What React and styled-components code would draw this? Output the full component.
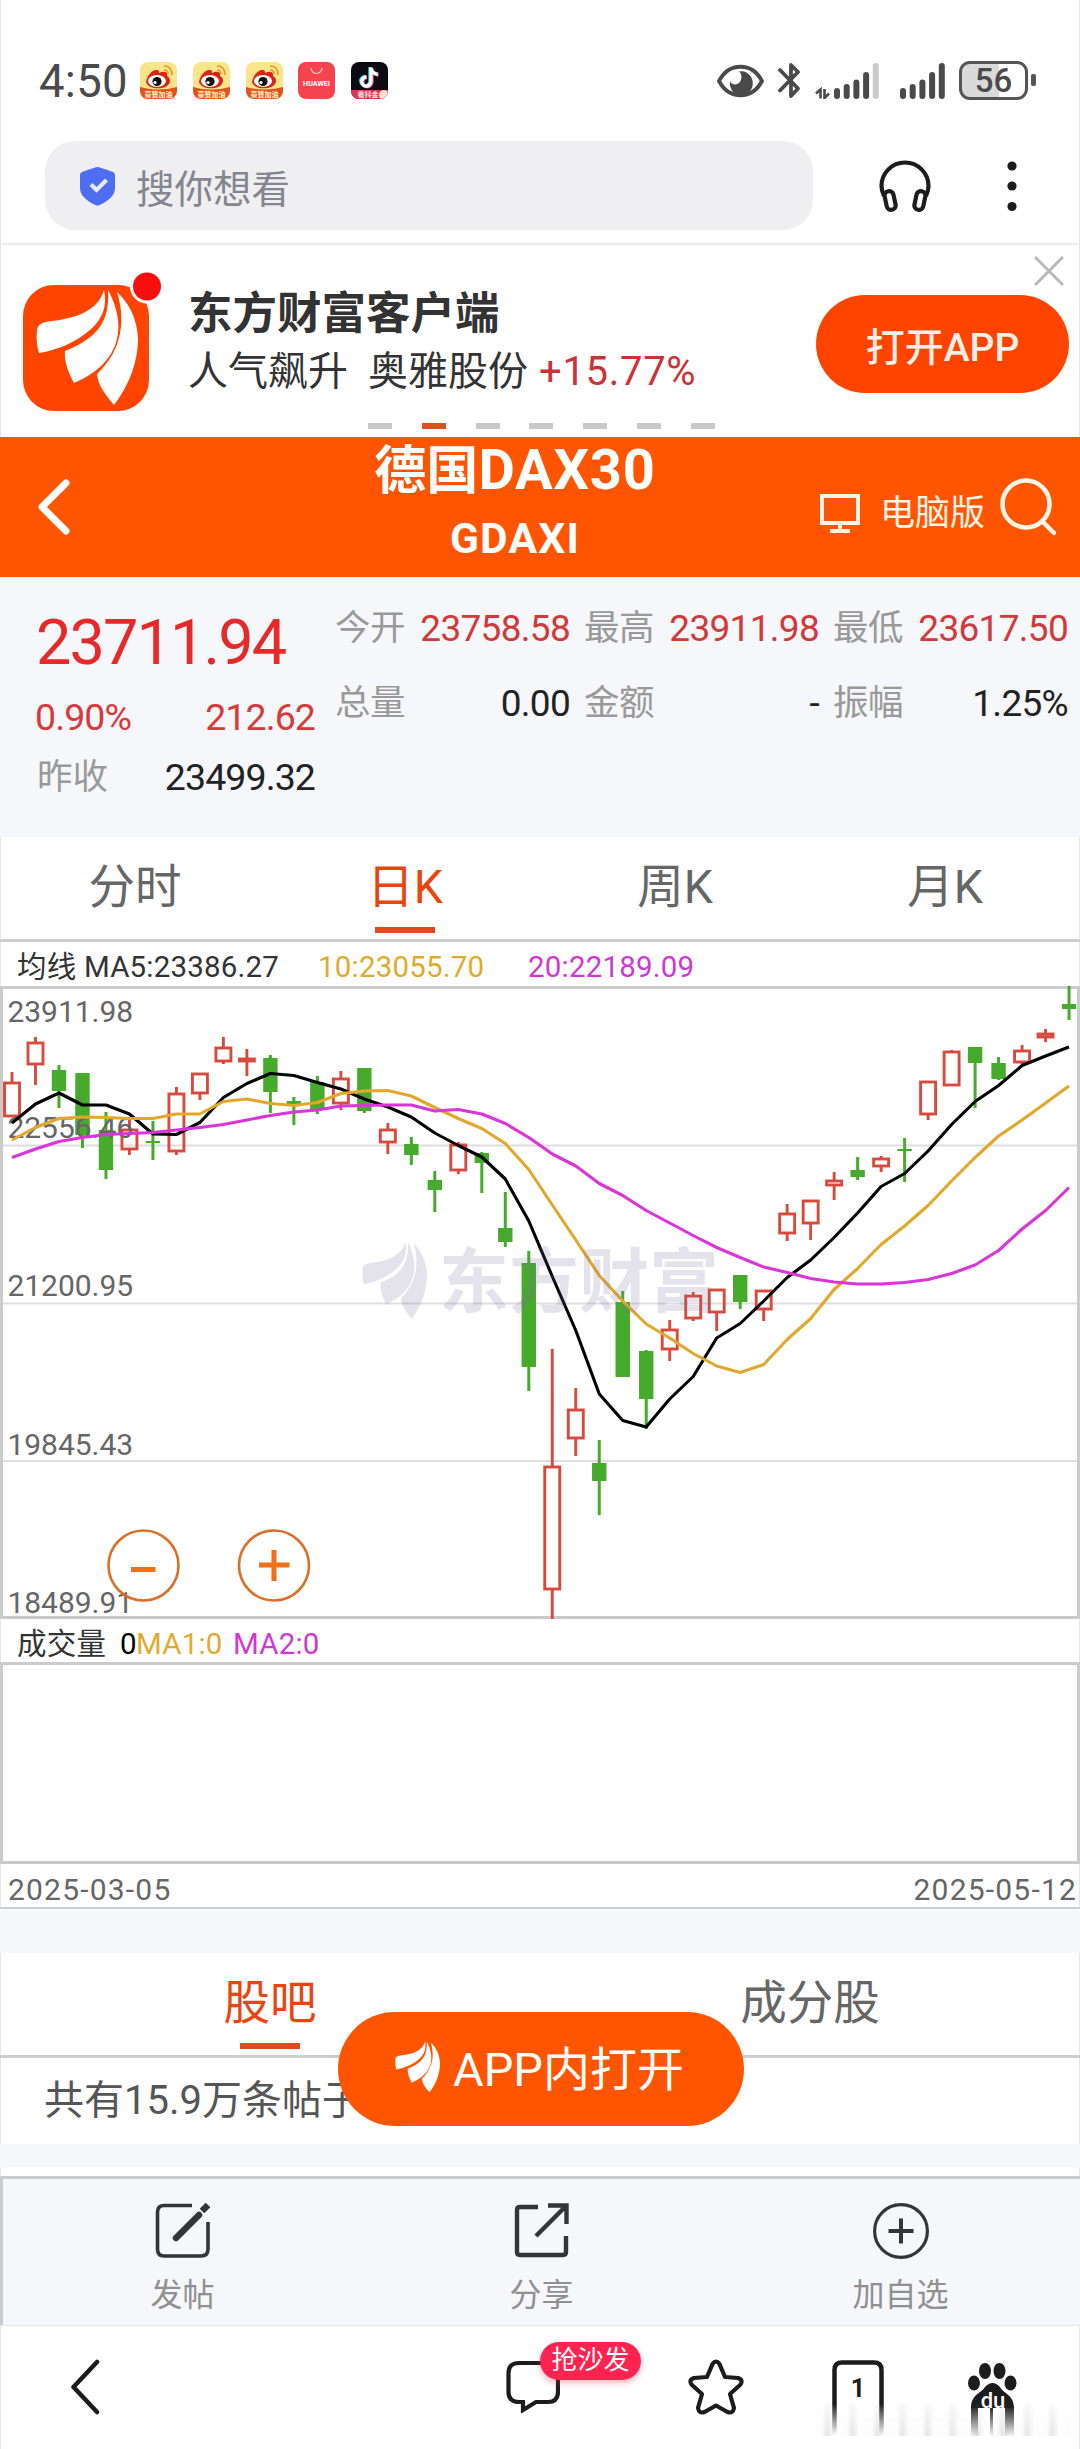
import React from 'react'
import styled, { createGlobalStyle } from 'styled-components'

const GlobalStyle = createGlobalStyle`
  *{
    box-sizing:border-box;
  }
  body{
    margin:0;
    background:#fff;
    font-family:Roboto, "Noto Sans CJK SC", sans-serif;
  }
  svg{
    display:block;
    flex:none;
  }
`;

// [open side, close side, high, low, up]
const candles = [
  [1083, 1116, 1072, 1117, 1], [1043, 1064, 1037, 1085, 1], [1070, 1091, 1065, 1108, 0],
  [1073, 1135, 1073, 1148, 0], [1130, 1170, 1112, 1179, 0], [1130, 1149, 1120, 1155, 1],
  [1141, 1143, 1121, 1160, 0], [1094, 1151, 1087, 1155, 1], [1074, 1093, 1073, 1100, 1],
  [1048, 1061, 1037, 1064, 1], [1059, 1061, 1049, 1076, 1], [1058, 1092, 1055, 1113, 0],
  [1101, 1104, 1097, 1125, 0], [1082, 1110, 1076, 1114, 0], [1079, 1103, 1071, 1110, 1],
  [1068, 1111, 1068, 1113, 0], [1130, 1142, 1123, 1154, 1], [1144, 1155, 1137, 1165, 0],
  [1180, 1190, 1171, 1212, 0], [1145, 1170, 1142, 1174, 1], [1153, 1163, 1152, 1193, 0],
  [1228, 1242, 1192, 1247, 0], [1263, 1367, 1251, 1391, 0], [1467, 1589, 1349, 1619, 1],
  [1410, 1438, 1388, 1456, 1], [1463, 1481, 1440, 1515, 0], [1302, 1377, 1291, 1377, 0],
  [1351, 1399, 1350, 1429, 0], [1330, 1349, 1320, 1361, 1], [1296, 1318, 1292, 1321, 1],
  [1290, 1312, 1289, 1331, 1], [1275, 1302, 1275, 1309, 0], [1291, 1309, 1290, 1321, 1],
  [1214, 1233, 1204, 1241, 1], [1201, 1223, 1200, 1240, 1], [1181, 1185, 1172, 1200, 1],
  [1170, 1177, 1157, 1180, 0], [1159, 1166, 1156, 1172, 1], [1149, 1151, 1138, 1182, 0],
  [1082, 1114, 1081, 1120, 1], [1052, 1085, 1050, 1086, 1], [1047, 1063, 1047, 1108, 0],
  [1063, 1079, 1057, 1080, 0], [1051, 1062, 1045, 1064, 1], [1034, 1037, 1029, 1042, 1],
  [1004, 1009, 986, 1020, 0],
]

const ma5 = [1123, 1104, 1093, 1105, 1105, 1114, 1134, 1134.5, 1122.5, 1097.5, 1083.5, 1073.5, 1075.5, 1082.5, 1089, 1099, 1107, 1117, 1133, 1145.5, 1157, 1179, 1221, 1276.5, 1330.5, 1394, 1420.5, 1427, 1399, 1376.5, 1338, 1323.5, 1301, 1277.5, 1260, 1237.5, 1213, 1186.5, 1173.5, 1151, 1124.5, 1101.5, 1085.5, 1065.5, 1056, 1047]
const ma10 = [1140, 1127.5, 1118.5, 1117, 1117.5, 1118.5, 1118.5, 1114, 1114, 1101.5, 1099, 1103.5, 1105.5, 1102.5, 1093.5, 1091, 1090.5, 1096, 1107.5, 1118.5, 1128.5, 1143.5, 1169.5, 1205, 1240, 1275.5, 1301, 1324, 1338, 1353.5, 1366, 1372.5, 1364.5, 1339.5, 1318.5, 1289.5, 1268.5, 1244.5, 1226, 1205.5, 1181, 1157.5, 1136, 1120, 1103, 1086]
const ma20 = [1157.5, 1149, 1141.5, 1137.5, 1134.5, 1133.5, 1132.5, 1130, 1127.5, 1124.5, 1120, 1115.5, 1112, 1110, 1106, 1105.5, 1105, 1105, 1111, 1109.5, 1114, 1123.5, 1137.5, 1154, 1166, 1183.5, 1195.5, 1210.5, 1223, 1235.5, 1247.5, 1257.5, 1267, 1272.5, 1278.5, 1282, 1284, 1284, 1282.5, 1279.5, 1273.5, 1265, 1250.5, 1229, 1210.5, 1187.5]

const xAt = (i) => 12 + i * 23.49
const toPoints = (list) => list.map((y, i) => `${xAt(i).toFixed(1)},${y}`).join(' ')

const axisLabels = [
  ['23911.98', 1022], ['22556.46', 1138], ['21200.95', 1296], ['19845.43', 1455], ['18489.91', 1613],
]

const quotes = [
  { label: '今开', value: '23758.58', red: true },
  { label: '最高', value: '23911.98', red: true },
  { label: '最低', value: '23617.50', red: true },
  { label: '总量', value: '0.00' },
  { label: '金额', value: '-' },
  { label: '振幅', value: '1.25%' },
]

const Petals = () => (
  <>
    <path d='M104 291C98 312 76 319 52 322C42 323 38 325 37 331C36 340 37 347 39 354C58 351 76 343 90 331C104 319 107 305 104 291Z' />
    <path d='M108 291C110 322 98 339 65 352C64 363 69 375 74 384C98 374 115 358 118 334C120 318 114 302 108 291Z' />
    <path d='M117 293C125 318 124 350 97 375C98 387 106 396 114 406C131 384 138 360 138 340C137 318 128 303 117 293Z' />
  </>
)

const WeiboIcon = () => (
  <svg width='37' height='37' viewBox='0 0 37 37'>
    <defs><clipPath id='wb'><rect width='37' height='37' rx='8' /></clipPath></defs>
    <g clipPath='url(#wb)'>
      <rect width='37' height='37' fill='#fbe58a' />
      <path d='M0 25Q18 30 37 25V37H0Z' fill='#e2521c' />
      <path d='M6 20C7 13 13 7 17 8C19 8 19 9 19 11C23 9 28 9 27 14C31 16 31 21 27 24C21 28 8 27 6 20Z' fill='#dd2414' />
      <ellipse cx='17' cy='19' rx='9' ry='6' fill='#fff' />
      <circle cx='17' cy='19.5' r='4.6' fill='#111' />
      <circle cx='15' cy='20.5' r='1.6' fill='#fff' />
      <path d='M24 4Q32 4 32 13M24 8Q28 8 28 12' fill='none' stroke='#e39a2c' strokeWidth='1.6' />
      <text x='18.5' y='35' fontSize='7' fontWeight='700' textAnchor='middle' fill='#fff3c4'>豪赞加油</text>
    </g>
  </svg>
)

const HuaweiIcon = () => (
  <svg width='37' height='37' viewBox='0 0 37 37'>
    <rect width='37' height='37' rx='8' fill='#f5444e' />
    <path d='M13 6A5.5 5.5 0 0 0 24 6' fill='none' stroke='#ffd9da' strokeWidth='1.2' />
    <text x='18.5' y='24' fontSize='7.2' fontWeight='700' textAnchor='middle' fill='#fff'>HUAWEI</text>
  </svg>
)

const TiktokIcon = () => (
  <svg width='37' height='37' viewBox='0 0 37 37'>
    <defs><clipPath id='tk'><rect width='37' height='37' rx='8' /></clipPath></defs>
    <g clipPath='url(#tk)'>
      <rect width='37' height='37' fill='#0c0b14' />
      <g fill='none' strokeWidth='3.4'>
        <path d='M19 5V19A4.6 4.6 0 1 1 14.5 14.5M19 6Q20 11 26 12' stroke='#35dbe0' />
        <path d='M21 6V20A4.6 4.6 0 1 1 16 15.5M21 7Q22 12 27.5 13' stroke='#f2385c' />
        <path d='M20 5.5V19.5A4.6 4.6 0 1 1 15.5 15M20 6.5Q21 11.5 27 12.5' stroke='#fff' />
      </g>
      <path d='M0 28H37V37H0Z' fill='#d63a52' />
      <text x='17' y='35' fontSize='7' fontWeight='700' textAnchor='middle' fill='#ffe1e1'>看抖金</text>
      <circle cx='33' cy='33' r='5' fill='#ffe3cf' />
    </g>
  </svg>
)

const SignalBars = ({ faded, data }) => (
  <svg width={data ? 64 : 45} height='37' viewBox={data ? '-19 0 64 37' : '0 0 45 37'}>
    {data && <path d='M-18 31.5L-13.5 27.500V36.500M-9.500 27V36L-5 31.500' fill='none' stroke='#4a4a4a' strokeWidth='2.6' />}
    {[26, 22, 17.5, 10, 1].map((y, i) => (
      <rect key={y} x={i * 9.7} y={y} width='6' height={37 - y} rx='3' fill={faded && i === 4 ? '#cbcbcb' : '#4a4a4a'} />
    ))}
  </svg>
)

const Chart = () => (
  <svg width='1080' height='634' viewBox='0 986 1080 634'>
    <g stroke='#dedede' strokeWidth='1.8'>
      <path d='M0 1145.5H1080M0 1303.5H1080M0 1461H1080' />
    </g>
    <path d='M1.5 987.5H1078.5V1617.5H1.5Z' fill='none' stroke='#cbcbcb' strokeWidth='3' />
    {candles.map(([top, bottom, high, low, up], i) => {
      const x = xAt(i)
      return up ? (
        <g key={i} fill='none' stroke='#d84a3e' strokeWidth='2.9'>
          <path d={`M${x} ${high}V${top}M${x} ${bottom}V${low}`} />
          <rect x={x - 7.500} y={top} width='15' height={bottom - top} />
        </g>
      ) : (
        <g key={i} fill='#46aa2c'>
          <rect x={x - 1.5} y={high} width='3' height={low - high} />
          <rect x={x - 7.2} y={top} width='14.4' height={bottom - top} />
        </g>
      )
    })}
    <g fontSize='30' fill='#666' letterSpacing='-0.05'>
      {axisLabels.map(([text, y]) => <text key={text} x='7.5' y={y}>{text}</text>)}
    </g>
    <g fill='none' strokeWidth='3.1' strokeLinejoin='round'>
      <polyline points={toPoints(ma5)} stroke='#000' />
      <polyline points={toPoints(ma10)} stroke='#e3a82b' />
      <polyline points={toPoints(ma20)} stroke='#d935d9' />
    </g>
    <g fill='#77709a' opacity='0.19'>
      <g transform='translate(362 1242) scale(0.637 0.670) translate(-36 -291)'><Petals /></g>
      <text x='439' y='1307' fontSize='70' fontWeight='700'>东方财富</text>
    </g>
    <g fill='none' stroke='#dc6f28'>
      <circle cx='143.5' cy='1565.5' r='35' strokeWidth='2.6' />
      <circle cx='274' cy='1565.5' r='35' strokeWidth='2.6' />
      <path d='M131 1569.5H155.500M259 1565H289.500M274 1550V1581' strokeWidth='5' stroke='#ee7018' />
    </g>
  </svg>
)

export default function App() {
  return (
    <Page lang='zh-CN'>
      <GlobalStyle />
      <StatusBar>
        <Clock>4:50</Clock>
        <AppIcons>
          <WeiboIcon /><WeiboIcon /><WeiboIcon /><HuaweiIcon /><TiktokIcon />
        </AppIcons>
        <StatusIcons>
          <svg width='47' height='34' viewBox='0 0 47 34'>
            <path d='M2 17C12-2 35-2 45 17C35 36 12 36 2 17Z' fill='none' stroke='#4a4a4a' strokeWidth='3.8' />
            <path d='M22 7.500A11.500 12 0 1 1 13 17C14 21 21 22 23.500 17C25.500 13 24 9 22 7.500Z' fill='#4a4a4a' />
          </svg>
          <svg width='23' height='37' viewBox='0 0 23 37'>
            <path d='M2 8L20 26.5L13 34V3L20 10L2 28.5' fill='none' stroke='#4a4a4a' strokeWidth='3.8' strokeLinecap='round' strokeLinejoin='round' />
          </svg>
          <SignalBars data faded />
          <SignalBars />
          <Battery><span>56</span></Battery>
        </StatusIcons>
      </StatusBar>

      <SearchRow>
        <SearchBox>
          <svg width='37' height='40' viewBox='0 0 37 40'>
            <path d='M18.5 1Q20 1 34 6Q36 7 36 9V22C36 30 29 35 20 39.3Q18.5 40 17 39.3C8 35 1 30 1 22V9Q1 7 3 6Q17 1 18.5 1Z' fill='#4e6ef2' />
            <path d='M12 18.5L17.5 24L27.5 14' fill='none' stroke='#e8ebfb' strokeWidth='4' />
          </svg>
          搜你想看
        </SearchBox>
        <svg width='52' height='52' viewBox='0 0 52 52' fill='none' stroke='#1c1c1c' strokeWidth='4.2'>
          <path d='M5 36Q2.5 30 2.5 26A23.5 23.5 0 0 1 49.5 26Q49.5 30 47 36' />
          <rect x='6.5' y='31' width='9' height='19' rx='4.5' transform='rotate(-12 11 40)' />
          <rect x='36.5' y='31' width='9' height='19' rx='4.5' transform='rotate(12 41 40)' />
        </svg>
        <svg width='10' height='52' viewBox='0 0 10 52' fill='#1c1c1c'>
          <circle cx='5' cy='6' r='4.6' /><circle cx='5' cy='26' r='4.6' /><circle cx='5' cy='46.5' r='4.6' />
        </svg>
      </SearchRow>

      <Banner>
        <BannerRow>
          <svg width='142' height='142' viewBox='20 270 142 142'>
            <rect x='23' y='286' width='126' height='126' rx='31' fill='#ff4400' />
            <g fill='#fff'><Petals /></g>
            <circle cx='147' cy='287.5' r='17' fill='#fff' />
            <circle cx='147' cy='287.5' r='14' fill='#fb0d0d' />
          </svg>
          <BannerText>
            <h3>东方财富客户端</h3>
            <p>人气飙升<Gap />奥雅股份<b>+15.77%</b></p>
          </BannerText>
          <OpenButton>打开APP</OpenButton>
        </BannerRow>
        <Dots>
          {[0, 1, 2, 3, 4, 5, 6].map((n) => <Dot key={n} $active={n === 1} />)}
        </Dots>
        <Close width='30' height='30' viewBox='0 0 30 30'>
          <path d='M1 1L29 29M29 1L1 29' stroke='#b9b9b9' strokeWidth='3' />
        </Close>
      </Banner>

      <TitleBar>
        <svg width='33' height='56' viewBox='0 0 33 56'>
          <path d='M29 4L5 28L29 52' fill='none' stroke='#fff' strokeWidth='7' strokeLinecap='round' strokeLinejoin='round' />
        </svg>
        <Title>
          <h1>德国<span>DAX30</span></h1>
          <h2>GDAXI</h2>
        </Title>
        <TitleTools>
          <svg width='42' height='40' viewBox='0 0 42 40' fill='none' stroke='#fff5e6' strokeWidth='4'>
            <path d='M3 2H39V29H3ZM21 29V37M11 37H31' />
          </svg>
          <span>电脑版</span>
          <svg width='56' height='58' viewBox='0 0 56 58' fill='none' stroke='#fff5e6' strokeWidth='4.5'>
            <circle cx='26' cy='26' r='23.5' />
            <path d='M42 43L54 55' strokeLinecap='round' />
          </svg>
        </TitleTools>
      </TitleBar>

      <Info>
        <PriceColumn>
          <Price>23711.94</Price>
          <PriceRow $red><span>0.90%</span><span>212.62</span></PriceRow>
          <PriceRow><em>昨收</em><span>23499.32</span></PriceRow>
        </PriceColumn>
        <QuoteGrid>
          {quotes.map((q) => (
            <Quote key={q.label} $red={q.red}><em>{q.label}</em><span>{q.value}</span></Quote>
          ))}
        </QuoteGrid>
      </Info>

      <Tabs>
        <Tab>分时</Tab>
        <Tab $active>日K</Tab>
        <Tab>周K</Tab>
        <Tab>月K</Tab>
      </Tabs>

      <MaRow>
        <MaText $width='301px'>均线 MA5:23386.27</MaText>
        <MaText $width='210px' $color='#dfab2e'>10:23055.70</MaText>
        <MaText $color='#cf38d2'>20:22189.09</MaText>
      </MaRow>
      <Chart />
      <VolumeRow>
        <MaText $width='103px'>成交量</MaText>
        <MaText $width='16px' $color='#000'>0</MaText>
        <MaText $width='97px' $color='#dfab2e'>MA1:0</MaText>
        <MaText $color='#cf38d2'>MA2:0</MaText>
      </VolumeRow>
      <VolumeBox />
      <DateRow><span>2025-03-05</span><span>2025-05-12</span></DateRow>
      <Spacer $height='44px' />

      <Tabs>
        <Tab $active>股吧</Tab>
        <Tab>成分股</Tab>
      </Tabs>
      <PostCount>共有15.9万条帖子</PostCount>
      <Spacer $height='23px' />

      <Toolbar>
        <Tool>
          <svg width='56' height='56' viewBox='0 0 56 56' fill='none' stroke='#333538'>
            <path d='M37 2.5H9Q2.5 2.5 2.5 9V46Q2.5 53 9 53H46Q53 53 53 46V19' strokeWidth='3.6' />
            <path d='M21 35L44 12' strokeWidth='6.5' strokeLinecap='round' />
            <path d='M47 8L53 2' strokeWidth='6.5' />
          </svg>
          发帖
        </Tool>
        <Tool>
          <svg width='56' height='56' viewBox='0 0 56 56' fill='none' stroke='#333538' strokeWidth='4.4'>
            <path d='M24 4H6Q3 4 3 7V49Q3 52 6 52H49Q52 52 52 49V33M34 2.5H52.5V21M52 3L22 33' />
          </svg>
          分享
        </Tool>
        <Tool>
          <svg width='56' height='56' viewBox='0 0 56 56' fill='none' stroke='#333538' strokeWidth='3.2'>
            <circle cx='28' cy='28' r='26.4' />
            <path d='M15.5 28H40.5M28 15.5V40.5' strokeWidth='4' />
          </svg>
          加自选
        </Tool>
      </Toolbar>

      <NavBar>
        <svg width='30' height='56' viewBox='0 0 30 56'>
          <path d='M27 3L3.5 28L27 53' fill='none' stroke='#1c1c1c' strokeWidth='4.5' strokeLinecap='round' strokeLinejoin='round' />
        </svg>
        <NavComment>
          <svg width='54' height='54' viewBox='0 0 54 54'>
            <path d='M13 4H42Q52 4 52 14V33Q52 43 42 43H30L17 51V43H13Q2.5 43 2.5 33V14Q2.5 4 13 4Z' fill='none' stroke='#1c1c1c' strokeWidth='4.2' />
          </svg>
          <Badge>抢沙发</Badge>
        </NavComment>
        <svg width='56' height='56' viewBox='0 0 56 56'>
          <path d='M24.5 5Q28 0 31.5 5L37 18L50 19Q56 21 52 26L42 35L46 49Q45 55 39.5 53L28 46.5L16.5 53Q11 55 10 49L14 35L4 26Q0 21 6 19L19 18Z' fill='none' stroke='#1c1c1c' strokeWidth='4.2' strokeLinejoin='round' />
        </svg>
        <svg width='52' height='76' viewBox='0 0 52 76'>
          <defs>
            <linearGradient id='fade' gradientUnits='userSpaceOnUse' x1='0' y1='44' x2='0' y2='75'>
              <stop offset='0' stopColor='#1c1c1c' />
              <stop offset='1' stopColor='#1c1c1c' stopOpacity='0' />
            </linearGradient>
          </defs>
          <path d='M2.5 76V10Q2.5 2.5 10 2.5H42Q49.5 2.5 49.5 10V76' fill='none' stroke='url(#fade)' strokeWidth='4.5' />
          <text x='26' y='36.5' fontSize='25' fontWeight='700' textAnchor='middle' fill='#1c1c1c'>1</text>
        </svg>
        <svg width='50' height='76' viewBox='0 0 50 76'>
          <g fill='#1c1c1c'>
            <ellipse cx='17' cy='9' rx='6' ry='8' /><ellipse cx='31.5' cy='9' rx='6' ry='8' />
            <ellipse cx='6' cy='21' rx='6' ry='7.5' /><ellipse cx='42.500' cy='21' rx='6' ry='7.5' />
            <path d='M3 46C3 33 12 32 17 25Q24.5 17 32 25C36 32 46 33 46 46Z' />
          </g>
          <path d='M3 46H10V76H3ZM22 46H25V76H22ZM37 46H46V76H37Z' fill='url(#fade)' />
          <text x='25' y='46' fontSize='22' fontWeight='500' textAnchor='middle' fill='#fff'>du</text>
        </svg>
        <Haze />
      </NavBar>

      <FloatButton>
        <svg width='45' height='52' viewBox='36 291 102 115' fill='#fff'><Petals /></svg>
        <span>APP内打开</span>
      </FloatButton>
    </Page>
  )
}

const Page = styled.div`
  position:relative;
  width:1080px;
  height:2449px;
  overflow:hidden;
  background:#fff;
  box-shadow:inset 1px 0 #e6e6e6, inset -1px 0 #e6e6e6;
  em{
    font-style:normal;
    color:#999;
  }
`;
const StatusBar = styled.div`
  display:flex;
  align-items:center;
  height:142px;
  padding:19px 44px 0 39px;
`;
const Clock = styled.div`
  width:101px;
  padding-top:2px;
  font-size:45.5px;
  letter-spacing:0.3px;
  color:#4a4a4a;
`;
const AppIcons = styled.div`
  display:flex;
  gap:15.8px;
`;
const StatusIcons = styled.div`
  display:flex;
  align-items:center;
  gap:14px;
  margin-left:auto;
  svg:nth-child(4){
    margin:0 0 0 7px;
  }
`;
const Battery = styled.div`
  position:relative;
  width:69px;
  height:39px;
  margin-right:8px;
  border:3px solid #555;
  border-radius:11px;
  background:linear-gradient(90deg, #dadada 58%, #fff 58%);
  font-size:33px;
  font-weight:500;
  line-height:34px;
  text-align:center;
  color:#4a4a4a;
  &:after{
    content:'';
    position:absolute;
    right:-11px;
    top:10px;
    width:5px;
    height:12px;
    border-radius:2px;
    background:#555;
  }
`;
const SearchRow = styled.div`
  display:flex;
  align-items:center;
  height:103px;
  padding:0 0 14px 45px;
  border-bottom:2px solid #ececee;
  > svg:nth-child(2){
    margin:0 76px 0 66px;
  }
`;
const SearchBox = styled.div`
  display:flex;
  align-items:center;
  gap:20px;
  width:768px;
  height:89px;
  padding-left:34px;
  border-radius:30px;
  background:#efeff2;
  font-size:38.5px;
  color:#85858f;
`;
const Banner = styled.div`
  position:relative;
  height:192px;
`;
const BannerRow = styled.div`
  display:flex;
  align-items:center;
  height:178px;
  padding:12px 11px 0 20px;
`;
const BannerText = styled.div`
  flex:1;
  margin-left:26px;
  padding-top:3px;
  color:#333;
  h3{
    margin:0;
    font-size:44.5px;
    line-height:60px;
  }
  p{
    display:flex;
    margin:0;
    font-size:40px;
    line-height:56px;
  }
  b{
    margin-left:11px;
    font-weight:400;
    letter-spacing:0.7px;
    color:#cb3238;
  }
`;
const Gap = styled.span`
  width:20px;
`;
const OpenButton = styled.button`
  width:253px;
  height:98px;
  margin-top:7px;
  padding:0;
  border:0;
  border-radius:49px;
  background:#ff4400;
  color:#ffeee8;
  font-family:inherit;
  font-size:39px;
  font-weight:500;
`;
const Dots = styled.div`
  display:flex;
  gap:29.8px;
  padding-left:368px;
`;
const Dot = styled.i`
  width:24px;
  height:6px;
  background:${(p) => (p.$active ? '#e0501c' : '#c9c9c9')};
`;
const Close = styled.svg`
  position:absolute;
  right:16px;
  top:11px;
`;
const TitleBar = styled.div`
  display:flex;
  align-items:center;
  height:140px;
  padding-left:37px;
  background:#ff5500;
  color:#fff;
`;
const Title = styled.div`
  width:300px;
  margin-left:295px;
  text-align:center;
  white-space:nowrap;
  h1{
    margin:-5px 0 0;
    font-size:52px;
    line-height:66px;
  }
  h1 span{
    font-size:56px;
    letter-spacing:0.8px;
  }
  h2{
    margin:0;
    font-size:42.5px;
    line-height:68px;
    letter-spacing:1.2px;
  }
`;
const TitleTools = styled.div`
  display:flex;
  align-items:center;
  margin-left:154px;
  font-size:35px;
  color:#fff5e6;
  span{
    width:103px;
    margin:4px 17px 0 19px;
    white-space:nowrap;
  }
  svg:first-child{
    margin-top:14px;
  }
`;
const Info = styled.div`
  display:flex;
  height:260px;
  padding:0 12px 0 37px;
  background:#f5f7fa;
`;
const PriceColumn = styled.div`
  width:278px;
  padding-top:30px;
`;
const Price = styled.div`
  margin-left:-1px;
  font-size:63px;
  line-height:72px;
  letter-spacing:-1.9px;
  color:#e62a29;
`;
const PriceRow = styled.div`
  display:flex;
  justify-content:space-between;
  font-size:37.5px;
  line-height:60px;
  letter-spacing:-0.9px;
  color:${(p) => (p.$red ? '#d8393a' : '#222')};
  &:nth-child(2){
    margin:8px 0 0 -2px;
  }
  em{
    font-size:35.5px;
    letter-spacing:0;
  }
`;
const QuoteGrid = styled.div`
  display:grid;
  grid-template-columns:repeat(3, 235px);
  grid-auto-rows:75px;
  column-gap:14px;
  margin-left:20px;
  padding-top:14px;
`;
const Quote = styled.div`
  display:flex;
  justify-content:space-between;
  font-size:37px;
  line-height:75px;
  letter-spacing:-0.7px;
  color:${(p) => (p.$red ? '#d2393b' : '#222')};
  em{
    font-size:35.5px;
    letter-spacing:-0.5px;
  }
`;
const Tabs = styled.div`
  display:flex;
  height:105px;
  border-bottom:3px solid #cdcdcd;
`;
const Tab = styled.div`
  position:relative;
  flex:1;
  font-size:46.5px;
  line-height:101px;
  text-align:center;
  color:${(p) => (p.$active ? '#e8450f' : '#666')};
  &:after{
    content:'';
    display:${(p) => (p.$active ? 'block' : 'none')};
    position:absolute;
    left:50%;
    bottom:6px;
    width:60px;
    height:6px;
    margin-left:-30px;
    background:#e04a1c;
  }
`;
const MaRow = styled.div`
  display:flex;
  align-items:center;
  height:44px;
  padding:6px 0 0 17px;
`;
const MaText = styled.span`
  width:${(p) => p.$width || 'auto'};
  font-size:29.5px;
  line-height:40px;
  white-space:nowrap;
  letter-spacing:0.2px;
  color:${(p) => p.$color || '#333'};
`;
const VolumeRow = styled.div`
  display:flex;
  align-items:center;
  height:42px;
  padding:5px 0 0 17px;
`;
const VolumeBox = styled.div`
  height:202px;
  border:3px solid #cbcbcb;
`;
const DateRow = styled.div`
  display:flex;
  justify-content:space-between;
  height:45px;
  padding:5px 3px 0 8px;
  border-bottom:2px solid #cdcdcd;
  font-size:30px;
  line-height:42px;
  letter-spacing:1.2px;
  color:#666;
`;
const Spacer = styled.div`
  height:${(p) => p.$height};
  background:#f5f7fa;
`;
const PostCount = styled.div`
  height:86px;
  padding-left:44px;
  font-size:40px;
  line-height:86px;
  color:#555;
`;
const Toolbar = styled.div`
  display:flex;
  height:149px;
  margin-top:9px;
  border:solid #cbccd0;
  border-width:3px 0 0 3px;
  background:#f6f7fa;
`;
const Tool = styled.div`
  flex:1;
  display:flex;
  flex-direction:column;
  align-items:center;
  padding-top:24px;
  font-size:32px;
  line-height:73px;
  color:#909090;
`;
const NavBar = styled.div`
  position:relative;
  display:flex;
  align-items:flex-start;
  height:124px;
  padding:33px 0 0 70px;
  border-top:1px solid #e6e6ea;
  > svg:nth-child(3){
    margin-left:128px;
  }
  > svg:nth-child(4){
    margin:1px 0 0 88px;
  }
  > svg:nth-child(5){
    margin:3px 0 0 84px;
  }
`;
const NavComment = styled.div`
  position:relative;
  margin-left:406px;
`;
const Badge = styled.span`
  position:absolute;
  left:34px;
  top:-17px;
  width:101px;
  height:38px;
  border-radius:19px;
  background:#ff2450;
  box-shadow:0 3px 6px rgba(255, 36, 80, 0.35);
  font-size:26px;
  line-height:37px;
  text-align:center;
  white-space:nowrap;
  color:#fff;
`;
const Haze = styled.div`
  position:absolute;
  left:815px;
  bottom:13px;
  width:256px;
  height:32px;
  opacity:0.5;
  background:repeating-linear-gradient(90deg, rgba(150, 150, 150, 0.05) 0 7px, rgba(150, 150, 150, 0.5) 12px, rgba(150, 150, 150, 0.05) 19px 25px);
  mask-image:linear-gradient(#0004, #000);
`;
const FloatButton = styled.button`
  position:absolute;
  left:338px;
  top:2012px;
  display:flex;
  align-items:center;
  gap:13px;
  width:406px;
  height:114px;
  padding:0 0 4px 57px;
  border:0;
  border-radius:57px;
  background:#ff5500;
  color:#fff;
  font-family:inherit;
  font-size:47px;
  white-space:nowrap;
  span{
    margin-top:-4px;
  }
`;
